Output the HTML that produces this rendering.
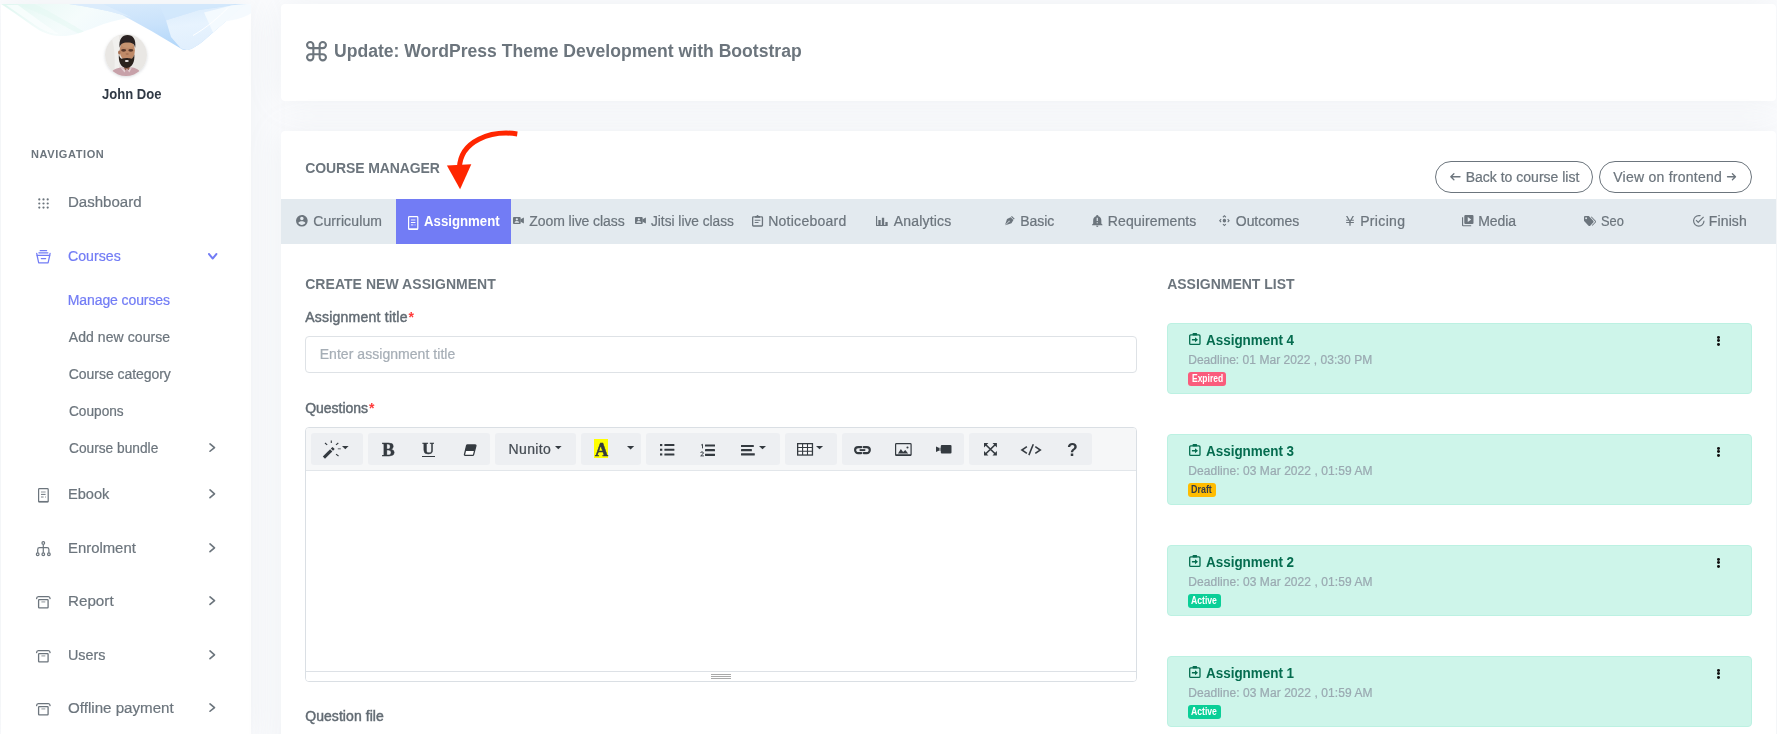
<!DOCTYPE html>
<html lang="en">
<head>
<meta charset="utf-8">
<title>Course Manager - Assignment</title>
<style>
*{box-sizing:border-box;margin:0;padding:0}
html,body{width:1777px;height:734px;overflow:hidden}
body{background:#fbfcfe;font-family:"Liberation Sans",sans-serif;position:relative;color:#6c757d}
.abs{position:absolute}
.t{position:absolute;white-space:pre;line-height:1;display:block}
.r{-webkit-text-stroke:0.22px currentColor}
svg{position:absolute;overflow:visible}
#sidebar{left:1px;top:4px;width:250px;height:740px;background:#fff;box-shadow:0 0 35px 0 rgba(154,161,171,.13)}
.card{background:#fff;border-radius:4px;box-shadow:0 0 35px 0 rgba(154,161,171,.13)}
#card1{left:281px;top:4px;width:1495px;height:97px}
#card2{left:281px;top:131px;width:1495px;height:640px}
#tabbar{left:281px;top:199px;width:1495px;height:45px;background:#e3eaef}
#tabact{left:396px;top:199px;width:115px;height:45px;background:#727cf5}
.pill{height:32px;top:161px;border:1px solid #6c757d;border-radius:16px;background:#fff}
#inp{left:305px;top:336px;width:832px;height:37px;border:1px solid #dee2e6;border-radius:4px;background:#fff}
#editor{left:305px;top:427px;width:832px;height:255px;border:1px solid #dadfe4;border-radius:4px;background:#fff;overflow:hidden}
#toolbar{left:0;top:0;width:830px;height:43px;background:#f6f7f8;border-bottom:1px solid #e2e6ea}
#statusbar{left:0;top:243px;width:830px;height:10px;background:#fff;border-top:1px solid #dde1e6}
.grip{left:711px;width:20px;height:1px;background:#a9a9a9}
.grp{top:433px;height:32px;background:#edeff2;border-radius:3px}
.alert{left:1167px;width:585px;height:71px;background:#cef5ea;border:1px solid #bcf1e2;border-radius:4px}
.badge{left:1188px;height:14px;border-radius:3px}
.dot3{left:1717px;width:3.4px;height:3.2px;border-radius:50%;background:#111}
</style>
</head>
<body>
<!-- ============ SIDEBAR ============ -->
<div class="abs" id="sidebar"></div>
<svg style="left:0;top:0" width="252" height="62" viewBox="0 0 252 62">
<defs>
<clipPath id="sbclip"><rect x="1" y="4" width="250" height="58"/></clipPath>
<linearGradient id="gteal" x1="0" y1="0.2" x2="1" y2="0.5"><stop offset="0" stop-color="#e1f7f1"/><stop offset="0.3" stop-color="#eefaf8"/><stop offset="0.6" stop-color="#f5fcfc"/><stop offset="1" stop-color="#eff8fd"/></linearGradient>
<linearGradient id="gblue" x1="0" y1="0" x2="0.35" y2="1"><stop offset="0" stop-color="#d9ebfc"/><stop offset="0.55" stop-color="#c9e2fb"/><stop offset="1" stop-color="#b3d7fa"/></linearGradient>
<linearGradient id="gblue2" x1="0" y1="0" x2="0.2" y2="1"><stop offset="0" stop-color="#d9ebfc"/><stop offset="0.5" stop-color="#e9f4fe"/><stop offset="1" stop-color="#e3f0fd"/></linearGradient>
<filter id="wblur" x="-5%" y="-20%" width="110%" height="140%"><feGaussianBlur stdDeviation="0.5"/></filter>
</defs>
<g clip-path="url(#sbclip)"><g filter="url(#wblur)">
<path fill="url(#gteal)" d="M1,4H132V17.2C118,20 109,22 103,24.3C95,27.5 88,30.2 81,32.4C72,35.3 66,36.3 59,36C50,35.4 43,32.5 37,28.7C25,21 12,11 1,4Z"/>
<path fill="#e4f8f3" opacity=".55" d="M16,4H34C52,12 70,24 84,31.4L78,33.3C60,24 38,11 16,4Z"/>
<path fill="#fafefe" opacity=".8" d="M6,5L38,27C45,31.5 52,34 59,34.4C50,28 30,14 18,5Z"/>
<path fill="url(#gblue)" d="M69,4H247L239.6,8.8L225,22L203,41.2C195,47.5 190,50 186,50C183,50 181.5,49 180.8,48.5L151.4,30.9L122,14.7C105,10 86,6.3 69,4Z"/>
<path fill="#dcecfc" opacity=".9" d="M69,4H103L132,17.5L122,14.7C105,10 86,6.3 69,4Z"/>
<path fill="url(#gblue2)" opacity=".95" d="M166,20.2L199,10L236,5L247,4L239.6,8.8L225,22L203,41.2C195,47.5 190,50 186.5,50L181,48.5L171,37Z"/>
<path fill="#d3e8fc" opacity=".75" d="M159,4H236L199,10L166,20.2Z"/>
<path fill="#f4fafe" opacity=".95" d="M204,12.5L232,5.2L247,4L251,4.3V13.2C245,17 236,20 226,21.3L213,32.5Z"/>
<path fill="none" stroke="#fff" stroke-opacity=".95" stroke-width="1" d="M228,7.6C219,17 207,27.5 193,35.5"/>
</g></g></svg>
<svg style="left:105.2px;top:33.9px;border-radius:50%;box-shadow:0 1px 3px rgba(120,125,135,.28)" width="42" height="42" viewBox="0 0 42 42">
<defs><clipPath id="avc"><circle cx="21" cy="21" r="21"/></clipPath><filter id="avb"><feGaussianBlur stdDeviation="0.6"/></filter></defs>
<g clip-path="url(#avc)"><rect width="42" height="42" fill="#e9e7e4"/>
<g filter="url(#avb)">
<path fill="#f1f0ee" d="M6,2C9,10 10.5,22 9.5,36L14,36L14,2Z"/>
<path fill="#c7a1a9" d="M4,43C5.5,37 10,34.4 15.5,33.6L27,33.6C32.5,34.2 36,37.5 37.5,43Z"/>
<path fill="#e3cfd3" d="M15.5,33.6L19.5,38.5L21.2,35.6ZM27,33.6L24.2,38.5L22.4,35.6Z"/>
<path fill="#8f5e47" d="M18.3,31L25.6,31L23.6,36.3L21.8,34.6L20.2,36.8Z"/>
<ellipse cx="22.3" cy="16.4" rx="7.6" ry="10.8" fill="#bf8a68"/>
<ellipse cx="22.6" cy="11.2" rx="5.8" ry="2.8" fill="#c99773" opacity=".8"/>
<ellipse cx="14.3" cy="18.6" rx="1.2" ry="2.1" fill="#a87255"/>
<path fill="#2a2321" d="M14.6,13.8C13.6,5.5 17.2,1 22.5,1C28,1 31.3,5.5 30.2,13.8C29.6,10.2 27.6,8.4 22.5,8.4C17.4,8.4 15.3,10.2 14.6,13.8Z"/>
<path fill="#2a201d" d="M13.9,20.5C14.6,23.6 15.8,25 17.6,24.6C19.6,23.8 23.6,23.8 25.5,24.6C27.2,25 28.4,23.6 29.3,20.5C30,27.5 27.4,33.6 21.5,34C15.7,33.6 13.2,27.5 13.9,20.5Z"/>
<ellipse cx="18.6" cy="16.3" rx="2.5" ry="1.35" fill="#4e3024" opacity=".9"/><ellipse cx="25.8" cy="16.3" rx="2.5" ry="1.35" fill="#4e3024" opacity=".9"/>
<ellipse cx="22.2" cy="20" rx="1.6" ry="1" fill="#a36f52" opacity=".8"/>
<ellipse cx="21.8" cy="27" rx="2" ry="0.95" fill="#f0ebe9"/>
</g></g></svg>
<svg style="left:0;top:0" width="60" height="220" viewBox="0 0 60 220"><circle cx="39.3" cy="199.4" r="1.1" fill="#6c757d"/><circle cx="39.3" cy="203.5" r="1.1" fill="#6c757d"/><circle cx="39.3" cy="207.6" r="1.1" fill="#6c757d"/><circle cx="43.5" cy="199.4" r="1.1" fill="#6c757d"/><circle cx="43.5" cy="203.5" r="1.1" fill="#6c757d"/><circle cx="43.5" cy="207.6" r="1.1" fill="#6c757d"/><circle cx="47.7" cy="199.4" r="1.1" fill="#6c757d"/><circle cx="47.7" cy="203.5" r="1.1" fill="#6c757d"/><circle cx="47.7" cy="207.6" r="1.1" fill="#6c757d"/></svg>
<svg style="left:36.20px;top:249.70px" width="14.80" height="13.70" viewBox="0 0 14.8 13.7" preserveAspectRatio="none" ><g fill="none" stroke="#727cf5" stroke-width="1.25" stroke-linecap="round" stroke-linejoin="round"><path d="M4.2,0.7H10.6"/><path d="M2.9,2.8H11.9"/><path d="M0.7,3.3L1.1,5.5H13.7L14.1,3.3"/><path d="M1.1,5.5L2.7,12.9H12.1L13.7,5.5"/><path d="M5.3,8.6H9.6"/></g></svg>
<svg style="left:207.90px;top:252.50px" width="9.40" height="6.60" viewBox="0 0 9 6" preserveAspectRatio="none" ><path fill="none" stroke="#727cf5" stroke-width="1.8" stroke-linecap="round" stroke-linejoin="round" d="M0.9,0.9L4.5,5L8.1,0.9"/></svg>
<svg style="left:208.60px;top:443.00px" width="6.60" height="9.20" viewBox="0 0 6 9" preserveAspectRatio="none" ><path fill="none" stroke="#6c757d" stroke-width="1.5" stroke-linecap="round" stroke-linejoin="round" d="M0.9,0.9L5,4.5L0.9,8.1"/></svg>
<svg style="left:38.10px;top:488.10px" width="10.80" height="14.60" viewBox="0 0 10.8 14.6" preserveAspectRatio="none" ><rect x="0.6" y="0.6" width="9.6" height="13.4" rx="0.8" fill="none" stroke="#6c757d" stroke-width="1.2"/><path stroke="#6c757d" stroke-width="1.3" d="M0.6,13.6H10.2"/><path stroke="#6c757d" stroke-opacity=".55" stroke-width="1.4" d="M3,4H7.6"/><path stroke="#6c757d" stroke-width="1" d="M3,6.4H7.6"/><path stroke="#6c757d" stroke-opacity=".6" stroke-width="1.3" d="M3,9H5.6M7,9H7.8"/></svg>
<svg style="left:208.60px;top:488.60px" width="6.60" height="9.60" viewBox="0 0 6 9" preserveAspectRatio="none" ><path fill="none" stroke="#6c757d" stroke-width="1.5" stroke-linecap="round" stroke-linejoin="round" d="M0.9,0.9L5,4.5L0.9,8.1"/></svg>
<svg style="left:36.20px;top:541.00px" width="14.60" height="15.00" viewBox="0 0 14.6 15" preserveAspectRatio="none" ><g fill="none" stroke="#6c757d" stroke-width="1.2"><circle cx="7.3" cy="1.9" r="1.35"/><path d="M7.3,3.3V11.7"/><path d="M1.7,11.7V8.4Q1.7,6.6 3.5,6.6H11.1Q12.9,6.6 12.9,8.4V11.7"/><circle cx="1.7" cy="13.2" r="1.35"/><circle cx="7.3" cy="13.2" r="1.35"/><circle cx="12.9" cy="13.2" r="1.35"/></g></svg>
<svg style="left:208.60px;top:542.80px" width="6.60" height="9.60" viewBox="0 0 6 9" preserveAspectRatio="none" ><path fill="none" stroke="#6c757d" stroke-width="1.5" stroke-linecap="round" stroke-linejoin="round" d="M0.9,0.9L5,4.5L0.9,8.1"/></svg>
<svg style="left:36.20px;top:596.10px" width="14.70" height="12.50" viewBox="0 0 14.7 12.5" preserveAspectRatio="none" ><path fill="none" stroke="#6c757d" stroke-width="1.3" stroke-linecap="round" d="M0.6,2.6Q0.7,0.7 2.4,0.65H12.3Q14,0.7 14.1,2.6"/><rect x="2.6" y="3.6" width="9.5" height="8.2" rx="0.6" fill="none" stroke="#6c757d" stroke-width="1.3"/><path stroke="#6c757d" stroke-opacity=".65" stroke-width="1.2" d="M5.4,5.9H9.3"/></svg>
<svg style="left:208.60px;top:595.80px" width="6.60" height="9.40" viewBox="0 0 6 9" preserveAspectRatio="none" ><path fill="none" stroke="#6c757d" stroke-width="1.5" stroke-linecap="round" stroke-linejoin="round" d="M0.9,0.9L5,4.5L0.9,8.1"/></svg>
<svg style="left:36.20px;top:650.10px" width="14.70" height="12.50" viewBox="0 0 14.7 12.5" preserveAspectRatio="none" ><path fill="none" stroke="#6c757d" stroke-width="1.3" stroke-linecap="round" d="M0.6,2.6Q0.7,0.7 2.4,0.65H12.3Q14,0.7 14.1,2.6"/><rect x="2.6" y="3.6" width="9.5" height="8.2" rx="0.6" fill="none" stroke="#6c757d" stroke-width="1.3"/><path stroke="#6c757d" stroke-opacity=".65" stroke-width="1.2" d="M5.4,5.9H9.3"/></svg>
<svg style="left:208.60px;top:649.60px" width="6.60" height="9.60" viewBox="0 0 6 9" preserveAspectRatio="none" ><path fill="none" stroke="#6c757d" stroke-width="1.5" stroke-linecap="round" stroke-linejoin="round" d="M0.9,0.9L5,4.5L0.9,8.1"/></svg>
<svg style="left:36.20px;top:703.20px" width="14.70" height="12.50" viewBox="0 0 14.7 12.5" preserveAspectRatio="none" ><path fill="none" stroke="#6c757d" stroke-width="1.3" stroke-linecap="round" d="M0.6,2.6Q0.7,0.7 2.4,0.65H12.3Q14,0.7 14.1,2.6"/><rect x="2.6" y="3.6" width="9.5" height="8.2" rx="0.6" fill="none" stroke="#6c757d" stroke-width="1.3"/><path stroke="#6c757d" stroke-opacity=".65" stroke-width="1.2" d="M5.4,5.9H9.3"/></svg>
<svg style="left:208.60px;top:703.00px" width="6.60" height="9.20" viewBox="0 0 6 9" preserveAspectRatio="none" ><path fill="none" stroke="#6c757d" stroke-width="1.5" stroke-linecap="round" stroke-linejoin="round" d="M0.9,0.9L5,4.5L0.9,8.1"/></svg>
<!-- ============ MAIN ============ -->
<div class="abs card" id="card1"></div>
<div class="abs card" id="card2"></div>
<div class="abs" id="tabbar"></div>
<div class="abs" id="tabact"></div>
<div class="abs pill" style="left:1435px;width:158px"></div>
<div class="abs pill" style="left:1599px;width:153px"></div>
<div class="abs" id="inp"></div>
<div class="abs" id="editor"><div class="abs" id="toolbar"></div><div class="abs" id="statusbar"></div></div>
<div class="abs grp" style="left:311px;width:52px"></div>
<div class="abs grp" style="left:368px;width:122px"></div>
<div class="abs grp" style="left:495px;width:81px"></div>
<div class="abs grp" style="left:581px;width:60px"></div>
<div class="abs grp" style="left:646px;width:134px"></div>
<div class="abs grp" style="left:785px;width:52px"></div>
<div class="abs grp" style="left:842px;width:122px"></div>
<div class="abs grp" style="left:969px;width:123px"></div>
<!-- alerts -->
<div class="abs alert" style="top:323px"></div>
<div class="abs alert" style="top:434px"></div>
<div class="abs alert" style="top:545px"></div>
<div class="abs alert" style="top:656px"></div>
<div class="abs badge" style="top:372px;width:38px;background:#fa5c7c"></div>
<div class="abs badge" style="top:483px;width:28px;background:#ffbc00"></div>
<div class="abs badge" style="top:594px;width:33px;background:#0acf97"></div>
<div class="abs badge" style="top:705px;width:33px;background:#0acf97"></div>
<div class="abs" id="uline" style="left:422.3px;top:455.9px;width:12.9px;height:1.15px;background:#343a40"></div>
<div class="abs grip" style="top:674px"></div><div class="abs grip" style="top:676px"></div><div class="abs grip" style="top:678px"></div>
<!--DOTS-->
<svg style="left:306.30px;top:41.30px" width="21.00" height="20.40" viewBox="2 2 20 20" preserveAspectRatio="none" ><path fill="#6c757d" d="M6,2A4,4 0 0,1 10,6V8H14V6A4,4 0 0,1 18,2A4,4 0 0,1 22,6A4,4 0 0,1 18,10H16V14H18A4,4 0 0,1 22,18A4,4 0 0,1 18,22A4,4 0 0,1 14,18V16H10V18A4,4 0 0,1 6,22A4,4 0 0,1 2,18A4,4 0 0,1 6,14H8V10H6A4,4 0 0,1 2,6A4,4 0 0,1 6,2M16,18A2,2 0 0,0 18,20A2,2 0 0,0 20,18A2,2 0 0,0 18,16H16V18M14,10H10V14H14V10M6,16A2,2 0 0,0 4,18A2,2 0 0,0 6,20A2,2 0 0,0 8,18V16H6M8,6A2,2 0 0,0 6,4A2,2 0 0,0 4,6A2,2 0 0,0 6,8H8V6M18,8A2,2 0 0,0 20,6A2,2 0 0,0 18,4A2,2 0 0,0 16,6V8H18Z"/></svg>
<svg style="left:430px;top:120px" width="110" height="80" viewBox="430 120 110 80"><path fill="none" stroke="#ff2600" stroke-width="5" stroke-linecap="butt" d="M517.3,133.9C491,130.2 460.4,140.5 459.4,168"/><path fill="#ff2600" d="M446.9,165.4L471.3,164.3L460.1,189.3Z"/></svg>
<svg style="left:295.80px;top:214.80px" width="11.70" height="11.60" viewBox="2 2 20 20" preserveAspectRatio="none" ><path fill="#6c757d" d="M12,19.2C9.5,19.2 7.29,17.92 6,16C6.03,14 10,12.9 12,12.9C14,12.9 17.97,14 18,16C16.71,17.92 14.5,19.2 12,19.2M12,5A3,3 0 0,1 15,8A3,3 0 0,1 12,11A3,3 0 0,1 9,8A3,3 0 0,1 12,5M12,2A10,10 0 0,0 2,12A10,10 0 0,0 12,22A10,10 0 0,0 22,12C22,6.47 17.5,2 12,2Z"/></svg>
<svg style="left:407.90px;top:215.80px" width="10.40" height="14.00" viewBox="0 0 10.4 14" preserveAspectRatio="none" ><rect x="0.6" y="0.6" width="9.2" height="12.8" rx="0.8" fill="none" stroke="#fff" stroke-width="1.2"/><path stroke="#fff" stroke-width="1.5" d="M0.6,13.1H9.8"/><path stroke="#fff" stroke-opacity=".6" stroke-width="1.5" d="M2.9,4H7.4"/><path stroke="#fff" stroke-width="1" d="M2.9,6.5H7.4"/><path stroke="#fff" stroke-opacity=".7" stroke-width="1.2" d="M2.9,8.9H5.4M6.6,8.9H7.5"/></svg>
<svg style="left:513.30px;top:217.20px" width="10.90" height="7.00" viewBox="0 0 10.9 7" preserveAspectRatio="none" ><rect x="0" y="0" width="7.7" height="7" rx="0.9" fill="#6c757d"/><path fill="#6c757d" d="M7.6,2.2L10.9,0.5V6.5L7.6,4.8Z"/><circle cx="3.85" cy="2.35" r="1.15" fill="#e3eaef"/><path fill="#e3eaef" d="M1.5,5.8Q1.5,4 3.85,4Q6.2,4 6.2,5.8Z"/></svg>
<svg style="left:634.60px;top:217.20px" width="10.90" height="7.00" viewBox="0 0 10.9 7" preserveAspectRatio="none" ><rect x="0" y="0" width="7.7" height="7" rx="0.9" fill="#6c757d"/><path fill="#6c757d" d="M7.6,2.2L10.9,0.5V6.5L7.6,4.8Z"/><circle cx="3.85" cy="2.35" r="1.15" fill="#e3eaef"/><path fill="#e3eaef" d="M1.5,5.8Q1.5,4 3.85,4Q6.2,4 6.2,5.8Z"/></svg>
<svg style="left:752.20px;top:215.10px" width="11.10" height="11.60" viewBox="0 0 11.1 11.7" preserveAspectRatio="none" ><rect x="0.65" y="1.9" width="9.8" height="9.2" rx="0.7" fill="none" stroke="#6c757d" stroke-width="1.3"/><path fill="#6c757d" d="M3.1,2.7V0.9H4.5Q4.7,-0.1 5.55,-0.1Q6.4,-0.1 6.6,0.9H8V2.7Z"/><path stroke="#6c757d" stroke-width="1.1" d="M2.7,5.3H8.4M2.7,7.5H6.5"/></svg>
<svg style="left:876.30px;top:215.80px" width="11.70" height="10.00" viewBox="2 3 20 18" preserveAspectRatio="none" ><path fill="#6c757d" d="M22,21H2V3H4V19H6V10H10V19H12V6H16V19H18V14H22V21Z"/></svg>
<svg style="left:1005.00px;top:216.20px" width="9.70" height="9.30" viewBox="3.5 3.5 17.0 17.0" preserveAspectRatio="none" ><path fill="#6c757d" d="M15.54,3.5L20.5,8.47L19.07,9.88L14.12,4.93L15.54,3.5M3.5,19.78L10,13.31C9.9,13 9.97,12.61 10.23,12.35C10.62,11.96 11.26,11.96 11.65,12.35C12.04,12.75 12.04,13.38 11.65,13.77C11.39,14.03 11,14.1 10.69,14L4.22,20.5L14.83,16.95L18.36,10.59L13.42,5.64L7.05,9.17L3.5,19.78Z"/></svg>
<svg style="left:1092.40px;top:215.00px" width="10.50" height="12.00" viewBox="3 2 18 21" preserveAspectRatio="none" ><path fill="#6c757d" d="M12,2A2,2 0 0,0 10,4C10,4.1 10,4.19 10,4.29C7.12,5.14 5,7.82 5,11V17L3,19V20H21V19L19,17V11C19,7.82 16.88,5.14 14,4.29C14,4.19 14,4.1 14,4A2,2 0 0,0 12,2M11,7H13V12.5H11V7M11,14.5H13V16.5H11V14.5M10,21A2,2 0 0,0 12,23A2,2 0 0,0 14,21H10Z"/></svg>
<svg style="left:1219.20px;top:215.00px" width="10.80" height="11.30" viewBox="2 2 20 20" preserveAspectRatio="none" ><path fill="#6c757d" d="M12,8.8A3.2,3.2 0 0,1 15.2,12A3.2,3.2 0 0,1 12,15.2A3.2,3.2 0 0,1 8.8,12A3.2,3.2 0 0,1 12,8.8M12,2L15.4,5.2L14,6.7L12,4.8L10,6.7L8.6,5.2L12,2M12,22L8.6,18.8L10,17.3L12,19.2L14,17.3L15.4,18.8L12,22M2,12L5.2,8.6L6.7,10L4.8,12L6.7,14L5.2,15.4L2,12M22,12L18.8,15.4L17.3,14L19.2,12L17.3,10L18.8,8.6L22,12Z"/></svg>
<svg style="left:1346.20px;top:215.80px" width="8.00" height="9.70" viewBox="5.77 3 12.46 18" preserveAspectRatio="none" ><path fill="#6c757d" d="M11,21V16H6V14H11V13.71L10.16,12H6V10H9.19L5.77,3H8L12,11.18L16,3H18.23L14.81,10H18V12H13.84L13,13.71V14H18V16H13V21H11Z"/></svg>
<svg style="left:1462.20px;top:215.00px" width="11.50" height="11.30" viewBox="2 2 20 20" preserveAspectRatio="none" ><path fill="#6c757d" d="M4,6H2V20A2,2 0 0,0 4,22H18V20H4V6M20,2H8A2,2 0 0,0 6,4V16A2,2 0 0,0 8,18H20A2,2 0 0,0 22,16V4A2,2 0 0,0 20,2M12,14.5V5.5L18,10L12,14.5Z"/></svg>
<svg style="left:1584.00px;top:215.80px" width="12.00" height="10.00" viewBox="2 4 20 16" preserveAspectRatio="none" ><path fill="#6c757d" d="M5.5,9A1.5,1.5 0 0,0 7,7.5A1.5,1.5 0 0,0 5.5,6A1.5,1.5 0 0,0 4,7.5A1.5,1.5 0 0,0 5.5,9M17.41,11.58C17.77,11.94 18,12.44 18,13C18,13.55 17.78,14.05 17.41,14.41L12.41,19.41C12.05,19.77 11.55,20 11,20C10.45,20 9.95,19.78 9.58,19.41L2.59,12.42C2.22,12.05 2,11.55 2,11V6C2,4.89 2.89,4 4,4H9C9.55,4 10.05,4.22 10.41,4.58L17.41,11.58M13.54,5.71L14.54,4.71L21.41,11.58C21.78,11.94 22,12.45 22,13C22,13.55 21.78,14.05 21.42,14.41L16.04,19.79L15.04,18.79L20.75,13L13.54,5.71Z"/></svg>
<svg style="left:1692.70px;top:215.00px" width="11.60" height="11.70" viewBox="2 2 20 20" preserveAspectRatio="none" ><path fill="#6c757d" d="M20,12A8,8 0 0,1 12,20A8,8 0 0,1 4,12A8,8 0 0,1 12,4C12.76,4 13.5,4.11 14.2,4.31L15.77,2.74C14.61,2.26 13.34,2 12,2A10,10 0 0,0 2,12A10,10 0 0,0 12,22A10,10 0 0,0 22,12M7.91,10.08L6.5,11.5L11,16L21,6L19.59,4.58L11,13.17L7.91,10.08Z"/></svg>
<svg style="left:1450.30px;top:173.30px" width="10.50" height="7.50" viewBox="0 0 10.5 7.5" preserveAspectRatio="none" ><path fill="none" stroke="#6c757d" stroke-width="1.3" stroke-linecap="round" stroke-linejoin="round" d="M10,3.75H0.8M3.9,0.7L0.8,3.75L3.9,6.8"/></svg>
<svg style="left:1727.30px;top:173.30px" width="9.30" height="7.50" viewBox="0 0 9.3 7.5" preserveAspectRatio="none" ><path fill="none" stroke="#6c757d" stroke-width="1.3" stroke-linecap="round" stroke-linejoin="round" d="M0.5,3.75H8.5M5.4,0.7L8.5,3.75L5.4,6.8"/></svg>
<svg style="left:1188.50px;top:333.30px" width="11.70" height="12.00" viewBox="0 0 11.7 12" preserveAspectRatio="none" ><rect x="0.7" y="1.9" width="10.3" height="9.5" rx="1" fill="none" stroke="#056c4f" stroke-width="1.3"/><rect x="3.6" y="0" width="4.5" height="2.4" rx="0.7" fill="#056c4f"/><path fill="#056c4f" d="M2.9,5.9H6V4.2L9,6.75L6,9.3V7.6H2.9Z"/></svg>
<div class="abs dot3" style="top:335.9px"></div>
<div class="abs dot3" style="top:339.3px"></div>
<div class="abs dot3" style="top:342.7px"></div>
<svg style="left:1188.50px;top:444.30px" width="11.70" height="12.00" viewBox="0 0 11.7 12" preserveAspectRatio="none" ><rect x="0.7" y="1.9" width="10.3" height="9.5" rx="1" fill="none" stroke="#056c4f" stroke-width="1.3"/><rect x="3.6" y="0" width="4.5" height="2.4" rx="0.7" fill="#056c4f"/><path fill="#056c4f" d="M2.9,5.9H6V4.2L9,6.75L6,9.3V7.6H2.9Z"/></svg>
<div class="abs dot3" style="top:446.9px"></div>
<div class="abs dot3" style="top:450.3px"></div>
<div class="abs dot3" style="top:453.7px"></div>
<svg style="left:1188.50px;top:555.30px" width="11.70" height="12.00" viewBox="0 0 11.7 12" preserveAspectRatio="none" ><rect x="0.7" y="1.9" width="10.3" height="9.5" rx="1" fill="none" stroke="#056c4f" stroke-width="1.3"/><rect x="3.6" y="0" width="4.5" height="2.4" rx="0.7" fill="#056c4f"/><path fill="#056c4f" d="M2.9,5.9H6V4.2L9,6.75L6,9.3V7.6H2.9Z"/></svg>
<div class="abs dot3" style="top:557.9px"></div>
<div class="abs dot3" style="top:561.3px"></div>
<div class="abs dot3" style="top:564.7px"></div>
<svg style="left:1188.50px;top:666.30px" width="11.70" height="12.00" viewBox="0 0 11.7 12" preserveAspectRatio="none" ><rect x="0.7" y="1.9" width="10.3" height="9.5" rx="1" fill="none" stroke="#056c4f" stroke-width="1.3"/><rect x="3.6" y="0" width="4.5" height="2.4" rx="0.7" fill="#056c4f"/><path fill="#056c4f" d="M2.9,5.9H6V4.2L9,6.75L6,9.3V7.6H2.9Z"/></svg>
<div class="abs dot3" style="top:668.9px"></div>
<div class="abs dot3" style="top:672.3px"></div>
<div class="abs dot3" style="top:675.7px"></div>
<svg style="left:322.00px;top:440.00px" width="20.00" height="18.00" viewBox="0 0 20 18" preserveAspectRatio="none" ><g stroke="#343a40" stroke-linecap="butt" fill="none"><path stroke-width="3.1" d="M1.9,17.6L9.2,10.4"/><path stroke-width="3.1" d="M9.9,9.7L11.6,8"/><path stroke-width="1.1" d="M9.3,0.5V3"/><path stroke-width="1.1" d="M3,3L5.2,4.9"/><path stroke-width="1.1" d="M16.3,3L14,4.9"/><path stroke-width="1.1" stroke-opacity=".7" d="M15.8,8.8H18.8"/><path stroke-width="1.1" d="M14,14.1L16.5,16"/></g></svg>
<svg style="left:342.30px;top:445.90px" width="6.60" height="3.20" viewBox="0 0 10 5" preserveAspectRatio="none" ><path fill="#343a40" d="M0,0H10L5,5Z"/></svg>
<svg style="left:463.70px;top:443.90px" width="12.30" height="12.10" viewBox="0 0 12.3 12.1" preserveAspectRatio="none" ><path fill="#fff" stroke="#343a40" stroke-width="1.3" stroke-linejoin="round" d="M3.4,0.9H11.2Q12.1,0.9 11.9,1.8L9.6,10.6Q9.4,11.3 8.6,11.3H1.1Q0.3,11.3 0.5,10.5L2.6,1.6Q2.8,0.9 3.4,0.9Z"/><path fill="#343a40" d="M3.4,0.9H11.2Q12.1,0.9 11.9,1.8L10.5,7H1.3L2.6,1.6Q2.8,0.9 3.4,0.9Z"/></svg>
<svg style="left:555.40px;top:445.90px" width="6.60" height="3.20" viewBox="0 0 10 5" preserveAspectRatio="none" ><path fill="#343a40" d="M0,0H10L5,5Z"/></svg>
<div class="abs" style="left:593.9px;top:439px;width:14.2px;height:18.8px;background:#ffff00"></div>
<svg style="left:626.80px;top:445.80px" width="7.20" height="3.40" viewBox="0 0 10 5" preserveAspectRatio="none" ><path fill="#343a40" d="M0,0H10L5,5Z"/></svg>
<svg style="left:659.80px;top:444.10px" width="14.40" height="11.50" viewBox="0 0 14.4 11.5" preserveAspectRatio="none" ><rect x="0" y="0" width="2.3" height="2.1" fill="#343a40"/><rect x="4.4" y="0" width="10" height="2.1" rx="0.3" fill="#343a40"/><rect x="0" y="4.7" width="2.3" height="2.1" fill="#343a40"/><rect x="4.4" y="4.7" width="10" height="2.1" rx="0.3" fill="#343a40"/><rect x="0" y="9.4" width="2.3" height="2.1" fill="#343a40"/><rect x="4.4" y="9.4" width="10" height="2.1" rx="0.3" fill="#343a40"/></svg>
<svg style="left:700.00px;top:443.70px" width="15.00" height="12.40" viewBox="0 0 15 12.4" preserveAspectRatio="none" ><rect x="5" y="0.4" width="10" height="2.1" rx="0.3" fill="#343a40"/><rect x="5" y="5.1" width="10" height="2.1" rx="0.3" fill="#343a40"/><rect x="5" y="9.8" width="10" height="2.1" rx="0.3" fill="#343a40"/><path fill="none" stroke="#343a40" stroke-width="0.95" d="M1.2,1.1L2.5,0.3V4.4"/><path fill="none" stroke="#343a40" stroke-width="0.95" d="M0.6,8.9Q0.7,7.9 2,7.9Q3.4,7.9 3.4,9Q3.4,9.7 0.7,11.9H3.9"/></svg>
<svg style="left:741.20px;top:444.70px" width="13.80" height="10.40" viewBox="0 0 13.8 10.4" preserveAspectRatio="none" ><rect x="0" y="0" width="12.8" height="2.1" rx="0.3" fill="#343a40"/><rect x="0" y="4.1" width="10.9" height="2.1" rx="0.3" fill="#343a40"/><rect x="0" y="8.3" width="13.8" height="2.1" rx="0.3" fill="#343a40"/></svg>
<svg style="left:759.00px;top:445.90px" width="7.00" height="3.30" viewBox="0 0 10 5" preserveAspectRatio="none" ><path fill="#343a40" d="M0,0H10L5,5Z"/></svg>
<svg style="left:797.10px;top:443.20px" width="16.10" height="12.70" viewBox="0 0 16.1 12.7" preserveAspectRatio="none" ><rect x="0.65" y="0.65" width="14.8" height="11.4" fill="#fbfbfc" stroke="#343a40" stroke-width="1.3"/><path stroke="#343a40" stroke-width="1.1" d="M5.6,0.6V12.1M10.5,0.6V12.1M0.6,4.5H15.5M0.6,8.3H15.5"/></svg>
<svg style="left:816.10px;top:445.90px" width="7.10" height="3.30" viewBox="0 0 10 5" preserveAspectRatio="none" ><path fill="#343a40" d="M0,0H10L5,5Z"/></svg>
<svg style="left:854.10px;top:445.50px" width="16.90" height="8.20" viewBox="0 0 16.9 8.2" preserveAspectRatio="none" ><g fill="none" stroke="#343a40" stroke-width="2.2" stroke-linecap="round"><path d="M7.2,1.1H4.1A3,3 0 0,0 4.1,7.1H7.2"/><path d="M9.7,1.1H12.8A3,3 0 0,1 12.8,7.1H9.7"/><path d="M5.6,4.1H11.3" stroke-width="1.9" stroke-linecap="butt"/></g></svg>
<svg style="left:894.90px;top:443.00px" width="16.70" height="12.90" viewBox="0 0 16.7 12.9" preserveAspectRatio="none" ><rect x="0.6" y="0.6" width="15.5" height="11.7" rx="0.8" fill="none" stroke="#343a40" stroke-width="1.2"/><path stroke="#343a40" stroke-width="1.6" d="M0.6,12.1H16.1"/><path fill="#343a40" d="M3,10.4L5.9,5.9L8.1,9L10.3,6.9L13.2,10.4Z"/><circle cx="12.5" cy="4.5" r="1.05" fill="#343a40"/></svg>
<svg style="left:935.70px;top:445.20px" width="15.50" height="8.60" viewBox="0 0 15.5 8.6" preserveAspectRatio="none" ><rect x="4.8" y="0" width="10.7" height="8.6" rx="1.1" fill="#343a40"/><path fill="#343a40" d="M0,1.5L3.3,3V5.6L0,7.1Z"/><rect x="3.3" y="2.7" width="1.6" height="3.2" fill="#343a40" fill-opacity=".55"/></svg>
<svg style="left:983.80px;top:443.40px" width="12.90" height="12.50" viewBox="0 0 12.9 12.5" preserveAspectRatio="none" ><g stroke="#343a40" stroke-width="1.7" fill="none"><path d="M1.5,1.5L11.4,11M11.4,1.5L1.5,11"/></g><path fill="#343a40" d="M0,0H4.4L0,4.4ZM12.9,0V4.4L8.5,0ZM0,12.5V8.1L4.4,12.5ZM12.9,12.5H8.5L12.9,8.1Z"/></svg>
<svg style="left:1020.80px;top:444.20px" width="20.20" height="11.30" viewBox="0 0 20.2 11.3" preserveAspectRatio="none" ><g fill="none" stroke="#343a40" stroke-width="1.55" stroke-linejoin="miter"><path d="M5.9,2.7L0.9,6L5.9,9.3"/><path d="M12.3,0.2L7.9,11.1"/><path d="M14.3,2.7L19.3,6L14.3,9.3"/></g></svg>
<div id="txt" class="abs" style="left:0;top:0;width:1777px;height:734px;will-change:transform">
<span class="t" id="t_john" style="left:101.70px;top:86.90px;font-size:14px;font-weight:700;color:#313a46;letter-spacing:0.000px;transform:scaleX(0.9329);transform-origin:0 0;">John Doe</span>
<span class="t" id="t_nav" style="left:31.00px;top:149.30px;font-size:11px;font-weight:700;color:#6c757d;letter-spacing:0.591px;">NAVIGATION</span>
<span class="t r" id="t_dash" style="left:67.53px;top:194.00px;font-size:15.5px;font-weight:400;color:#6c757d;letter-spacing:0.000px;transform:scaleX(0.9703);transform-origin:0 0;">Dashboard</span>
<span class="t r" id="t_courses" style="left:68.30px;top:248.00px;font-size:15.5px;font-weight:400;color:#727cf5;letter-spacing:0.000px;transform:scaleX(0.9143);transform-origin:0 0;">Courses</span>
<span class="t r" id="t_manage" style="left:67.80px;top:292.70px;font-size:14px;font-weight:400;color:#727cf5;letter-spacing:-0.100px;">Manage courses</span>
<span class="t r" id="t_addnew" style="left:68.80px;top:330.00px;font-size:14px;font-weight:400;color:#6c757d;letter-spacing:0.069px;">Add new course</span>
<span class="t r" id="t_cat" style="left:68.80px;top:366.70px;font-size:14px;font-weight:400;color:#6c757d;letter-spacing:-0.051px;">Course category</span>
<span class="t r" id="t_coupons" style="left:68.80px;top:403.80px;font-size:14px;font-weight:400;color:#6c757d;letter-spacing:0.000px;transform:scaleX(0.9761);transform-origin:0 0;">Coupons</span>
<span class="t r" id="t_bundle" style="left:68.80px;top:440.80px;font-size:14px;font-weight:400;color:#6c757d;letter-spacing:0.000px;transform:scaleX(0.9805);transform-origin:0 0;">Course bundle</span>
<span class="t r" id="t_ebook" style="left:67.56px;top:486.00px;font-size:15.5px;font-weight:400;color:#6c757d;letter-spacing:0.000px;transform:scaleX(0.9421);transform-origin:0 0;">Ebook</span>
<span class="t r" id="t_enrol" style="left:67.54px;top:540.00px;font-size:15.5px;font-weight:400;color:#6c757d;letter-spacing:0.000px;transform:scaleX(0.9597);transform-origin:0 0;">Enrolment</span>
<span class="t r" id="t_report" style="left:67.52px;top:592.70px;font-size:15.5px;font-weight:400;color:#6c757d;letter-spacing:0.000px;transform:scaleX(0.9802);transform-origin:0 0;">Report</span>
<span class="t r" id="t_users" style="left:67.57px;top:646.70px;font-size:15.5px;font-weight:400;color:#6c757d;letter-spacing:0.000px;transform:scaleX(0.9264);transform-origin:0 0;">Users</span>
<span class="t r" id="t_offline" style="left:68.30px;top:699.70px;font-size:15.5px;font-weight:400;color:#6c757d;letter-spacing:0.000px;transform:scaleX(0.9764);transform-origin:0 0;">Offline payment</span>
<span class="t" id="t_title" style="left:334.32px;top:41.70px;font-size:18px;font-weight:700;color:#6c757d;letter-spacing:0.000px;transform:scaleX(0.9769);transform-origin:0 0;">Update: WordPress Theme Development with Bootstrap</span>
<span class="t" id="t_cm" style="left:305.20px;top:160.80px;font-size:14px;font-weight:700;color:#6c757d;letter-spacing:-0.116px;">COURSE MANAGER</span>
<span class="t r" id="t_tab0" style="left:313.20px;top:213.80px;font-size:14px;font-weight:400;color:#6c757d;letter-spacing:0.121px;">Curriculum</span>
<span class="t" id="t_tab1" style="left:424.30px;top:213.90px;font-size:14.5px;font-weight:700;color:#fff;letter-spacing:0.000px;transform:scaleX(0.9115);transform-origin:0 0;">Assignment</span>
<span class="t r" id="t_tab2" style="left:529.30px;top:213.80px;font-size:14px;font-weight:400;color:#6c757d;letter-spacing:-0.076px;">Zoom live class</span>
<span class="t r" id="t_tab3" style="left:650.50px;top:213.80px;font-size:14px;font-weight:400;color:#6c757d;letter-spacing:0.000px;transform:scaleX(0.9765);transform-origin:0 0;">Jitsi live class</span>
<span class="t r" id="t_tab4" style="left:768.20px;top:213.80px;font-size:14px;font-weight:400;color:#6c757d;letter-spacing:0.260px;">Noticeboard</span>
<span class="t r" id="t_tab5" style="left:893.70px;top:213.80px;font-size:14px;font-weight:400;color:#6c757d;letter-spacing:0.197px;">Analytics</span>
<span class="t r" id="t_tab6" style="left:1020.20px;top:213.80px;font-size:14px;font-weight:400;color:#6c757d;letter-spacing:-0.059px;">Basic</span>
<span class="t r" id="t_tab7" style="left:1107.80px;top:213.80px;font-size:14px;font-weight:400;color:#6c757d;letter-spacing:0.123px;">Requirements</span>
<span class="t r" id="t_tab8" style="left:1235.80px;top:213.80px;font-size:14px;font-weight:400;color:#6c757d;letter-spacing:-0.057px;">Outcomes</span>
<span class="t r" id="t_tab9" style="left:1360.20px;top:213.80px;font-size:14px;font-weight:400;color:#6c757d;letter-spacing:0.332px;">Pricing</span>
<span class="t r" id="t_tab10" style="left:1478.20px;top:213.80px;font-size:14px;font-weight:400;color:#6c757d;letter-spacing:-0.061px;">Media</span>
<span class="t r" id="t_tab11" style="left:1601.30px;top:213.80px;font-size:14px;font-weight:400;color:#6c757d;letter-spacing:0.000px;transform:scaleX(0.9155);transform-origin:0 0;">Seo</span>
<span class="t r" id="t_tab12" style="left:1708.80px;top:213.80px;font-size:14px;font-weight:400;color:#6c757d;letter-spacing:0.128px;">Finish</span>
<span class="t r" id="t_back" style="left:1465.70px;top:169.70px;font-size:14px;font-weight:400;color:#6c757d;letter-spacing:0.005px;">Back to course list</span>
<span class="t r" id="t_view" style="left:1613.20px;top:169.70px;font-size:14px;font-weight:400;color:#6c757d;letter-spacing:0.251px;">View on frontend</span>
<span class="t" id="t_create" style="left:305.20px;top:277.00px;font-size:14px;font-weight:700;color:#6c757d;letter-spacing:0.043px;">CREATE NEW ASSIGNMENT</span>
<span class="t" id="t_alist" style="left:1167.20px;top:276.80px;font-size:14px;font-weight:700;color:#6c757d;letter-spacing:-0.015px;">ASSIGNMENT LIST</span>
<span class="t r" id="t_atitle" style="left:305.20px;top:310.00px;font-size:14px;font-weight:400;color:#626b73;letter-spacing:0.231px;-webkit-text-stroke:0.45px #626b73;">Assignment title</span>
<span class="t" id="t_ast1" style="left:408.60px;top:310.00px;font-size:14px;font-weight:700;color:#ff3b3b;letter-spacing:-0.600px;">*</span>
<span class="t r" id="t_ph" style="left:319.70px;top:347.00px;font-size:14px;font-weight:400;color:#a6aeb6;letter-spacing:0.046px;">Enter assignment title</span>
<span class="t r" id="t_q" style="left:305.20px;top:401.20px;font-size:14px;font-weight:400;color:#626b73;letter-spacing:-0.029px;-webkit-text-stroke:0.45px #626b73;">Questions</span>
<span class="t" id="t_ast2" style="left:368.90px;top:401.20px;font-size:14px;font-weight:700;color:#ff3b3b;letter-spacing:-0.900px;">*</span>
<span class="t r" id="t_nunito" style="left:508.50px;top:441.90px;font-size:14px;font-weight:400;color:#454c53;letter-spacing:0.383px;">Nunito</span>
<span class="t" id="t_B" style="left:382.00px;top:439.90px;font-size:19px;font-weight:700;color:#343a40;letter-spacing:-0.800px;font-family:'Liberation Serif',serif;-webkit-text-stroke:0.5px #343a40;">B</span>
<span class="t" id="t_U" style="left:422.30px;top:441.10px;font-size:16.5px;font-weight:700;color:#343a40;letter-spacing:0.900px;font-family:'Liberation Serif',serif;-webkit-text-stroke:0.5px #343a40;">U</span>
<span class="t" id="t_A" style="left:595.00px;top:440.90px;font-size:18.2px;font-weight:700;color:#343a40;letter-spacing:-0.700px;font-family:'Liberation Serif',serif;-webkit-text-stroke:0.5px #343a40;">A</span>
<span class="t" id="t_help" style="left:1067.10px;top:441.90px;font-size:17.6px;font-weight:700;color:#343a40;letter-spacing:-0.850px;">?</span>
<span class="t r" id="t_qfile" style="left:305.20px;top:709.20px;font-size:14px;font-weight:400;color:#626b73;letter-spacing:0.064px;-webkit-text-stroke:0.45px #626b73;">Question file</span>
<span class="t" id="t_an0" style="left:1206.00px;top:333.00px;font-size:14px;font-weight:700;color:#056c4f;letter-spacing:0.000px;transform:scaleX(0.9596);transform-origin:0 0;">Assignment 4</span>
<span class="t r" id="t_dl0" style="left:1188.20px;top:354.20px;font-size:12px;font-weight:400;color:#9aa9b1;letter-spacing:0.039px;">Deadline: 01 Mar 2022 , 03:30 PM</span>
<span class="t" id="t_bd0" style="left:1191.50px;top:374.20px;font-size:10.4px;font-weight:700;color:#fff;letter-spacing:0.000px;transform:scaleX(0.8156);transform-origin:0 0;">Expired</span>
<span class="t" id="t_an1" style="left:1206.00px;top:444.00px;font-size:14px;font-weight:700;color:#056c4f;letter-spacing:0.000px;transform:scaleX(0.9596);transform-origin:0 0;">Assignment 3</span>
<span class="t r" id="t_dl1" style="left:1188.20px;top:465.20px;font-size:12px;font-weight:400;color:#9aa9b1;letter-spacing:0.072px;">Deadline: 03 Mar 2022 , 01:59 AM</span>
<span class="t" id="t_bd1" style="left:1191.30px;top:485.20px;font-size:10.4px;font-weight:700;color:#313a46;letter-spacing:0.000px;transform:scaleX(0.8593);transform-origin:0 0;">Draft</span>
<span class="t" id="t_an2" style="left:1206.00px;top:555.00px;font-size:14px;font-weight:700;color:#056c4f;letter-spacing:0.000px;transform:scaleX(0.9596);transform-origin:0 0;">Assignment 2</span>
<span class="t r" id="t_dl2" style="left:1188.20px;top:576.20px;font-size:12px;font-weight:400;color:#9aa9b1;letter-spacing:0.072px;">Deadline: 03 Mar 2022 , 01:59 AM</span>
<span class="t" id="t_bd2" style="left:1191.30px;top:596.20px;font-size:10.4px;font-weight:700;color:#fff;letter-spacing:0.000px;transform:scaleX(0.8310);transform-origin:0 0;">Active</span>
<span class="t" id="t_an3" style="left:1206.00px;top:666.00px;font-size:14px;font-weight:700;color:#056c4f;letter-spacing:0.000px;transform:scaleX(0.9596);transform-origin:0 0;">Assignment 1</span>
<span class="t r" id="t_dl3" style="left:1188.20px;top:687.20px;font-size:12px;font-weight:400;color:#9aa9b1;letter-spacing:0.072px;">Deadline: 03 Mar 2022 , 01:59 AM</span>
<span class="t" id="t_bd3" style="left:1191.30px;top:707.20px;font-size:10.4px;font-weight:700;color:#fff;letter-spacing:0.000px;transform:scaleX(0.8310);transform-origin:0 0;">Active</span>
</div>
</body>
</html>
